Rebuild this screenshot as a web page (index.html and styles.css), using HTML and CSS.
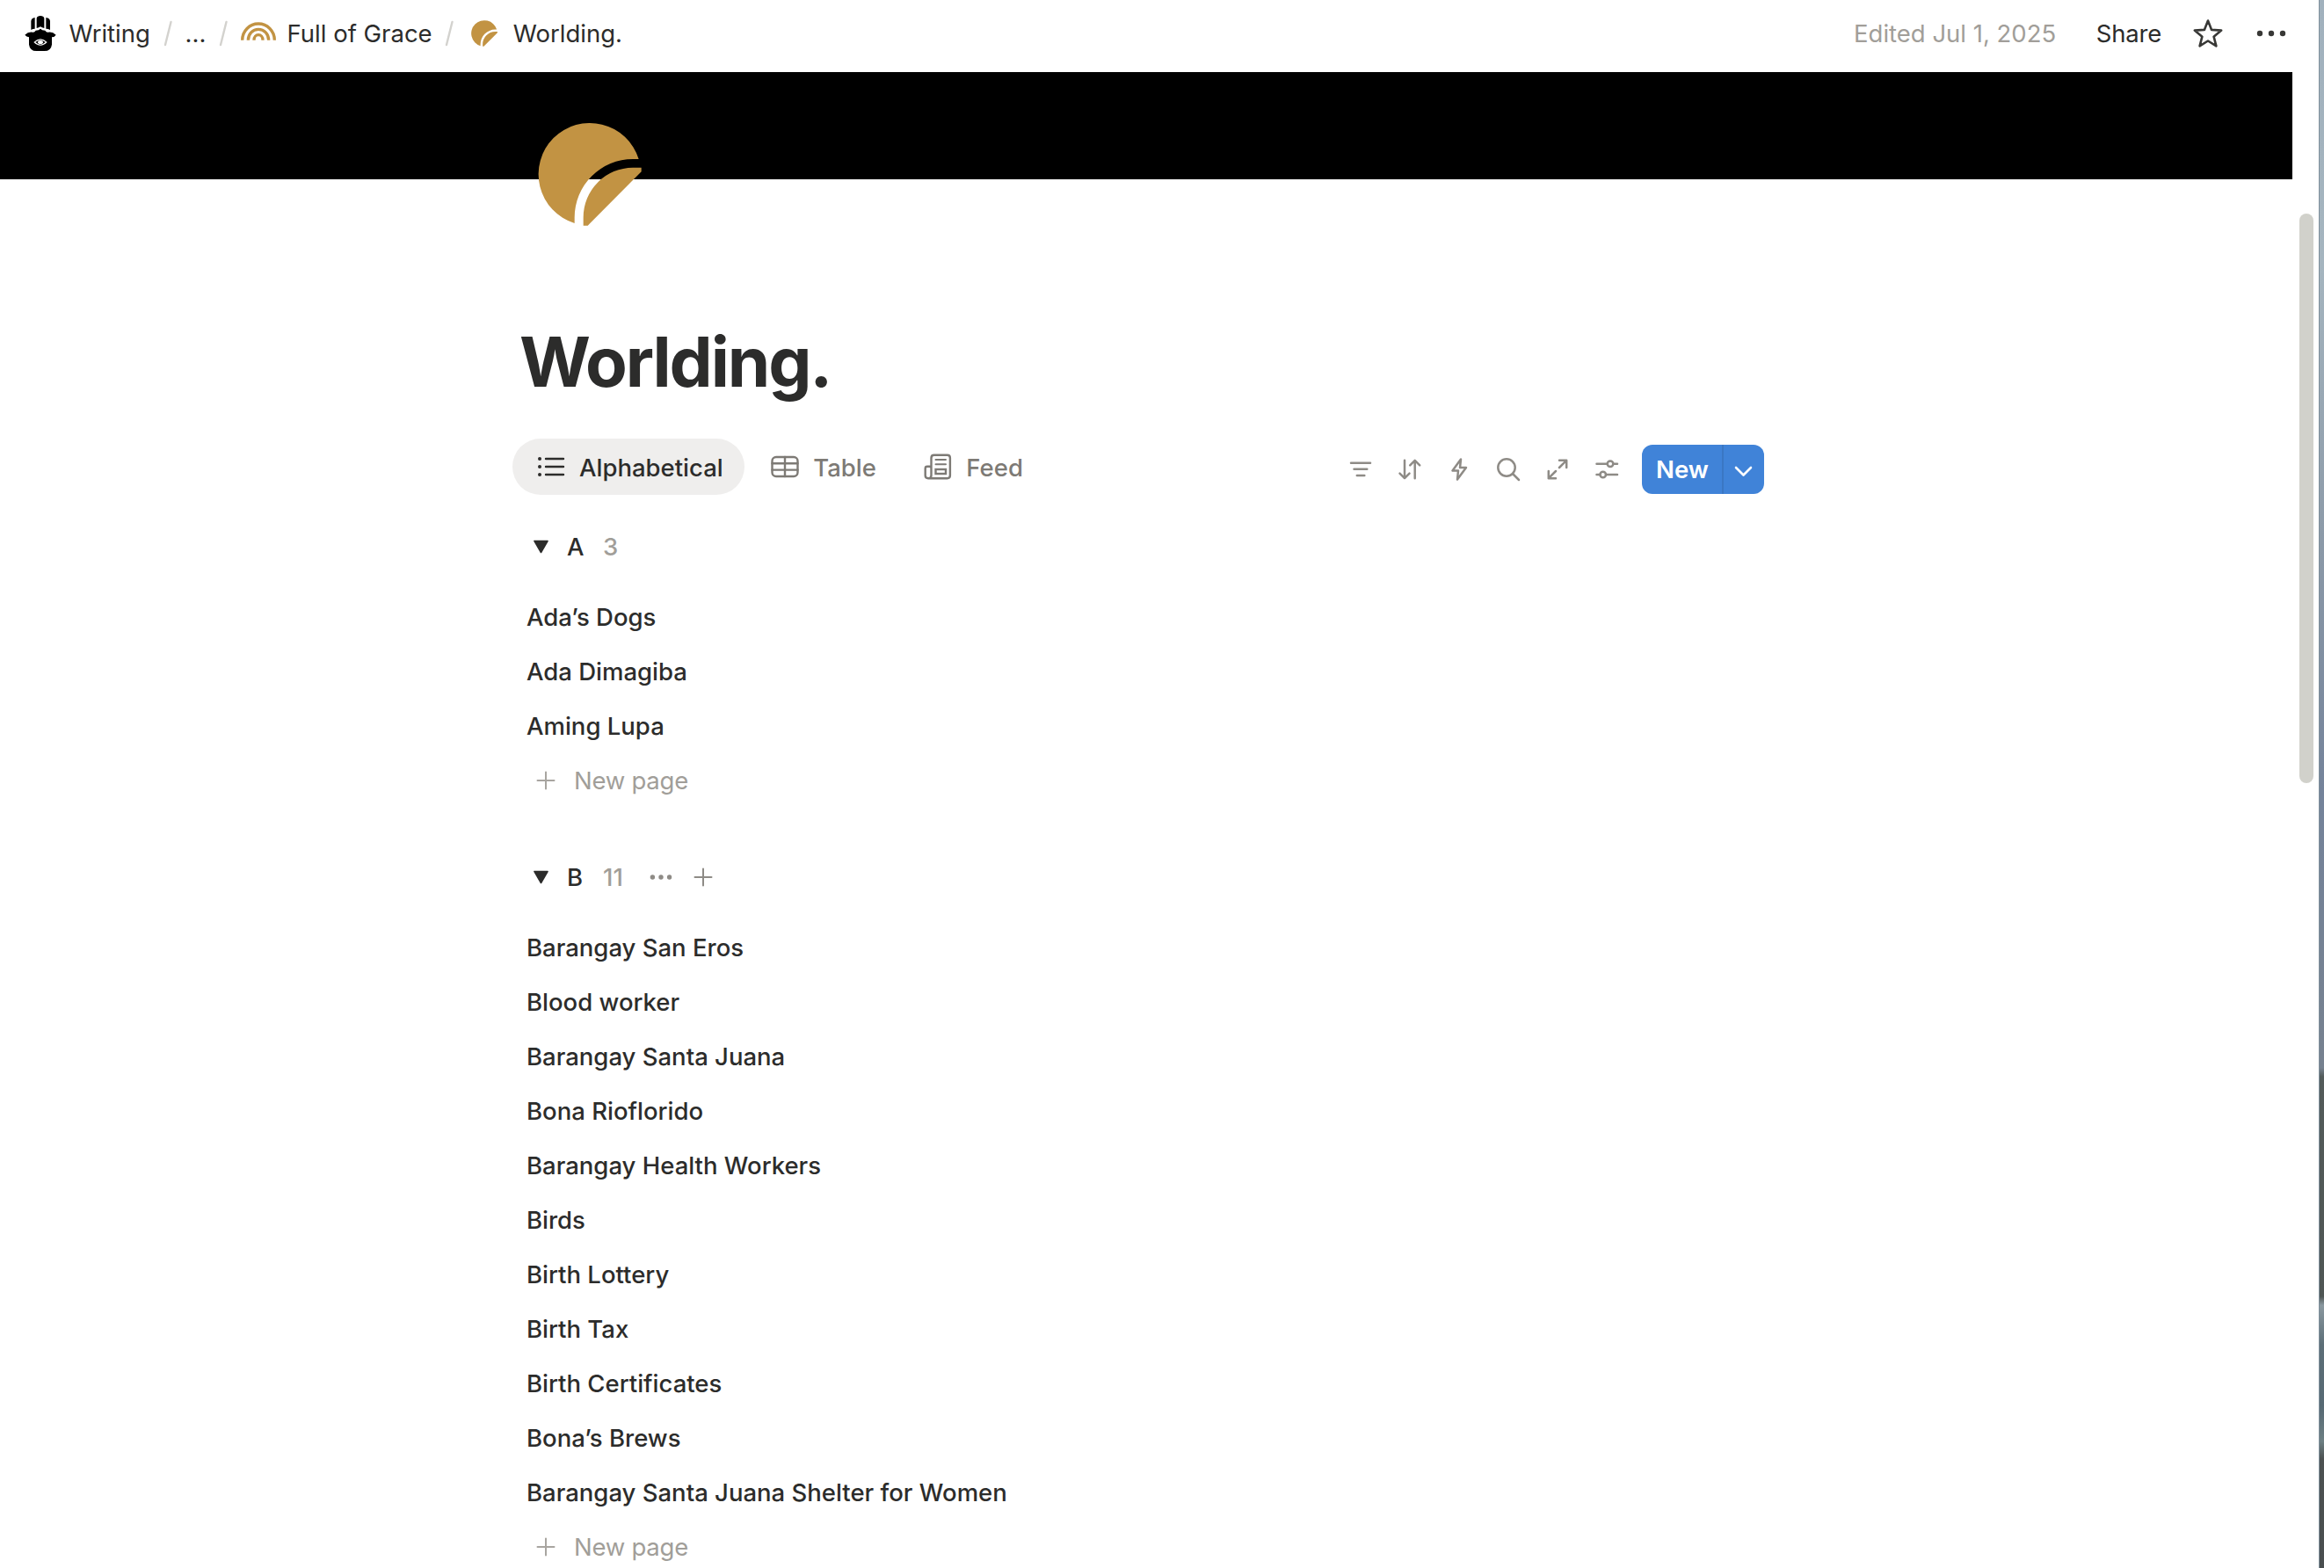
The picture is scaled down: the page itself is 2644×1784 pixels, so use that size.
FILE: index.html
```html
<!DOCTYPE html>
<html lang="en">
<head>
    <meta charset="utf-8">
    <meta name="viewport" content="width=device-width, initial-scale=1.0">
    <title>Worlding.</title>
    <link rel="stylesheet" href="styles.css">
</head>
<body>
    <div class="window">
        <header class="topbar">
            <nav class="breadcrumbs">
                <a class="crumb">
                    <svg class="crumb-icon" viewBox="78 54 120 120">
                        <path d="M106 102V72q1-10 13-12v38q-7 0-13 4zM125 96V62q2-8 13-8t13 8v34q-8-1-13-5-5 4-13 5zM171 102V72q-1-10-14-12v38q7 0 14 4z"/>
                        <path d="M85 119Q97 107 112 110Q118 111 122 104Q133 104 138 98Q143 104 154 104Q158 111 164 110Q179 107 191 119Q186 127 177 127V152Q174 174 152 174H124Q102 174 99 152V127Q90 126 85 119Z"/>
                        <path fill="#fff" d="M115 144Q138 122 161 144Q138 167 115 144Z"/>
                        <path d="M121 144Q138 129 155 144Q138 160 121 144Z"/>
                        <ellipse fill="#fff" cx="138" cy="144" rx="9" ry="6"/>
                    </svg>
                    <span>Writing</span>
                </a>
                <svg class="slash" viewBox="0 0 14 32"><path d="M4 29L10.500 3"/></svg>
                <a class="crumb"><span>...</span></a>
                <svg class="slash" viewBox="0 0 14 32"><path d="M4 29L10.500 3"/></svg>
                <a class="crumb">
                    <svg class="crumb-icon rainbow" viewBox="822 54 120 120">
                        <path d="M827 137a55 56 0 0 1 110 0M847 137a35 37 0 0 1 70 0M867 137a15 18 0 0 1 30 0"/>
                    </svg>
                    <span>Full of Grace</span>
                </a>
                <svg class="slash" viewBox="0 0 14 32"><path d="M4 29L10.500 3"/></svg>
                <a class="crumb">
                    <svg class="crumb-icon gold" viewBox="38 -1 472 472">
                        <path d="M441 183A175 175 0 1 0 222 402V382A199 199 0 0 1 421 183Z"/>
                        <path d="M252 410V382A170 170 0 0 1 421 212H450V226L267 410Z"/>
                    </svg>
                    <span>Worlding.</span>
                </a>
            </nav>
            <div class="topbar-actions">
                <span class="edited">Edited Jul 1, 2025</span>
                <a class="share">Share</a>
                <svg class="action-icon" viewBox="0 0 40 40">
                    <path class="star" d="M20 5.500L24.100 15.900L35.200 16.600L26.600 23.700L29.400 34.400L20 28.500L10.600 34.400L13.400 23.700L4.800 16.600L15.900 15.900Z"/>
                </svg>
                <svg class="action-icon" viewBox="0 0 40 40">
                    <circle cx="7" cy="20" r="3.200"/><circle cx="20" cy="20" r="3.200"/><circle cx="33" cy="20" r="3.200"/>
                </svg>
            </div>
        </header>

        <div class="cover"></div>

        <main class="page">
            <svg class="page-icon gold" viewBox="97 57 354 354">
                <path d="M441 183A175 175 0 1 0 222 402V382A199 199 0 0 1 421 183Z"/>
                <path d="M252 410V382A170 170 0 0 1 421 212H450V226L267 410Z"/>
            </svg>
            <h1>Worlding.</h1>

            <div class="view-bar">
                <div class="tabs">
                    <a class="tab active">
                        <svg viewBox="0 0 36 36">
                            <path d="M12 9H32M12 18H32M12 27H32"/>
                            <path class="bullets" d="M5 9h.01M5 18h.01M5 27h.01"/>
                        </svg>
                        <span>Alphabetical</span>
                    </a>
                    <a class="tab">
                        <svg viewBox="0 0 36 36">
                            <rect x="3.500" y="7" width="29" height="22" rx="4.500"/>
                            <path d="M18 7V29M3.500 14.300H32.500M3.500 21.600H32.500"/>
                        </svg>
                        <span>Table</span>
                    </a>
                    <a class="tab">
                        <svg viewBox="0 0 36 36">
                            <path d="M10.500 28V8q0-3.200 3.200-3.200h15q3.200 0 3.200 3.200v20q0 3.200-3.200 3.200H7q-3.300 0-3.300-3.200v-8q0-2.200 2.200-2.200h2.600q2 0 2 2M10.500 28q0 3-3 3.200"/>
                            <path class="thin" d="M15.500 10H27M15.500 15.300H27"/>
                            <rect x="15.500" y="21" width="11.500" height="5"/>
                        </svg>
                        <span>Feed</span>
                    </a>
                </div>
                <div class="tools">
                    <a class="tool"><svg viewBox="0 0 32 32"><path d="M5 8.700H27M8.500 15.800H23.300M11.800 23H20.300"/></svg></a>
                    <a class="tool"><svg viewBox="0 0 32 32"><path d="M10 5.700V26M4.500 20.700L10 26.200L15.500 20.700M21.700 26.300V6M16.200 11.300L21.700 5.800L27.200 11.300"/></svg></a>
                    <a class="tool"><svg viewBox="0 0 32 32"><path d="M18 4.500L8.500 17.500H15L14 27.500L24 14H17Z"/></svg></a>
                    <a class="tool"><svg viewBox="0 0 32 32"><circle cx="14" cy="14" r="9.700"/><path d="M21 21L28 28"/></svg></a>
                    <a class="tool"><svg viewBox="0 0 32 32"><path d="M5.800 18V26.200H14M5.800 26.200L14 18M18 5.800H26.200V14M26.200 5.800L18 14"/></svg></a>
                    <a class="tool"><svg viewBox="0 0 32 32"><path d="M4.500 9.700H16.700M23.300 9.700H28M4.500 22H8.300M15 22H28"/><circle cx="20" cy="9.700" r="3.300"/><circle cx="11.700" cy="22" r="3.300"/></svg></a>
                    <div class="new-button">
                        <span class="new-label">New</span>
                        <span class="new-more"><svg viewBox="0 0 24 24"><path d="M3 8L11.500 16.500L20 8"/></svg></span>
                    </div>
                </div>
            </div>

            <section class="group">
                <div class="group-header">
                    <svg class="toggle" viewBox="0 0 18 16"><path d="M1 1.500H16L8.500 14.500Z"/></svg>
                    <span class="letter">A</span>
                    <span class="count">3</span>
                </div>
                <ul>
                    <li>Ada’s Dogs</li>
                    <li>Ada Dimagiba</li>
                    <li>Aming Lupa</li>
                </ul>
                <a class="new-page">
                    <svg class="small-icon" viewBox="0 0 32 32"><path d="M16 6.500V25.500M6.500 16H25.500"/></svg>
                    <span>New page</span>
                </a>
            </section>

            <section class="group">
                <div class="group-header">
                    <svg class="toggle" viewBox="0 0 18 16"><path d="M1 1.500H16L8.500 14.500Z"/></svg>
                    <span class="letter">B</span>
                    <span class="count">11</span>
                    <svg class="small-icon dots" viewBox="0 0 32 32"><circle cx="6.400" cy="16" r="2.700"/><circle cx="16" cy="16" r="2.700"/><circle cx="25.600" cy="16" r="2.700"/></svg>
                    <svg class="small-icon add" viewBox="0 0 32 32"><path d="M16 6.500V25.500M6.500 16H25.500"/></svg>
                </div>
                <ul>
                    <li>Barangay San Eros</li>
                    <li>Blood worker</li>
                    <li>Barangay Santa Juana</li>
                    <li>Bona Rioflorido</li>
                    <li>Barangay Health Workers</li>
                    <li>Birds</li>
                    <li>Birth Lottery</li>
                    <li>Birth Tax</li>
                    <li>Birth Certificates</li>
                    <li>Bona’s Brews</li>
                    <li>Barangay Santa Juana Shelter for Women</li>
                </ul>
                <a class="new-page">
                    <svg class="small-icon" viewBox="0 0 32 32"><path d="M16 6.500V25.500M6.500 16H25.500"/></svg>
                    <span>New page</span>
                </a>
            </section>
        </main>

        <div class="scrollbar"></div>
    </div>
    <div class="desktop"></div>
</body>
</html>
```
FILE: styles.css
```css
* {
    margin: 0;
    padding: 0;
    box-sizing: border-box;
}

body {
    display: flex;
    height: 1784px;
    overflow: hidden;
    font-family: Inter, sans-serif;
    font-size: 27.5px;
    line-height: 40px;
    color: #2c2c2b;
    background-color: #ffffff;
}

svg {
    display: block;
    flex: none;
}

.window {
    position: relative;
    flex: 1;
    height: 1784px;
    overflow: hidden;
}

/* strip of desktop behind the window */
.desktop {
    width: 6px;
    border-left: 1px solid #7e8f9b;
    background: linear-gradient(#a1b1bd 0, #a5b5bf 300px, #8d9ba9 600px, #74839a 900px, #76818f 1215px, #535b5a 1225px, #4f5654 1475px, #8a989f 1485px, #5c6e77 1530px, #566973 1600px, #6d7f83 1640px, #4c5151 1660px, #494e4f 1784px);
}

/* Top bar */
.topbar {
    display: flex;
    justify-content: space-between;
    align-items: center;
    height: 82px;
    padding: 0 34px 6px 26px;
}

.breadcrumbs,
.crumb,
.topbar-actions {
    display: flex;
    align-items: center;
}

.crumb {
    gap: 12.5px;
}

.crumb-icon {
    width: 40px;
    height: 40px;
}

.slash {
    width: 14px;
    height: 32px;
    margin: 0 13px 0 12.7px;
    fill: none;
    stroke: #d3d2ce;
    stroke-width: 2.4;
    stroke-linecap: round;
}

.rainbow {
    fill: none;
    stroke: #c29343;
    stroke-width: 10;
}

.gold {
    fill: #c29343;
}

.edited {
    color: #a19e99;
    margin-right: 45.5px;
}

.share {
    letter-spacing: -0.2px;
    margin-right: 2px;
}

.action-icon {
    width: 40px;
    height: 40px;
    margin-left: 32px;
    fill: #383836;
}

.share + .action-icon {
    margin-left: 31px;
}

.star {
    fill: none;
    stroke: #383836;
    stroke-width: 2.6;
    stroke-linejoin: round;
}

/* Cover and title */
.cover {
    width: 2608px;
    height: 122px;
    background-color: #000000;
}

.page {
    width: 2007px;
    padding-left: 583px;
}

.page-icon {
    position: relative;
    width: 118px;
    height: 118px;
    margin: -65px 0 0 29px;
}

h1 {
    margin: 107px 0 40px 8px;
    font-size: 78px;
    line-height: 95px;
    font-weight: 700;
    letter-spacing: -2.1px;
}

/* Views */
.view-bar {
    display: flex;
    justify-content: space-between;
    height: 64px;
}

.tabs {
    display: flex;
    gap: 2px;
}

.tab {
    display: flex;
    align-items: center;
    gap: 14px;
    height: 64px;
    padding: 0 24.5px 0 26px;
    border-radius: 32px;
    font-weight: 500;
    color: #7d7a75;
}

.tab span {
    padding-top: 1px;
}

.tab.active {
    background-color: #efeeed;
    color: #2c2c2b;
}

.tab svg {
    width: 36px;
    height: 36px;
    fill: none;
    stroke: currentColor;
    stroke-width: 2.4;
    stroke-linecap: round;
}

.tab .bullets {
    stroke-width: 4;
}

.tab .thin {
    stroke-width: 2;
}

.tools {
    display: flex;
    align-items: center;
    padding-top: 6px;
}

.tool {
    width: 56px;
    padding: 0 12px;
}

.tool svg {
    width: 32px;
    height: 32px;
    fill: none;
    stroke: #8e8b86;
    stroke-width: 2.5;
    stroke-linecap: round;
    stroke-linejoin: round;
}

.new-button {
    display: flex;
    width: 139px;
    height: 56px;
    margin-left: 12px;
    border-radius: 12px;
    background-color: #4083d8;
    color: #ffffff;
    font-weight: 600;
    line-height: 56px;
}

.new-label {
    flex: 1;
    padding-left: 16px;
    border-right: 2px solid #3a77c3;
}

.new-more {
    display: flex;
    align-items: center;
    justify-content: center;
    width: 46px;
}

.new-more svg {
    width: 24px;
    height: 24px;
    margin-top: 4px;
    fill: none;
    stroke: #ffffff;
    stroke-width: 2.6;
    stroke-linecap: round;
    stroke-linejoin: round;
}

/* Groups */
.group {
    padding: 10px 0 20px 16px;
}

.group-header {
    display: flex;
    align-items: center;
    height: 98px;
    padding-left: 8px;
    font-weight: 500;
}

.toggle {
    width: 18px;
    height: 16px;
    fill: #2c2c2b;
    stroke: #2c2c2b;
    stroke-width: 1.6;
    stroke-linejoin: round;
}

.letter {
    width: 41px;
    margin-left: 20px;
}

.count {
    color: #a19e99;
}

.group ul {
    list-style: none;
}

.group li {
    height: 62px;
    line-height: 62px;
    font-weight: 500;
}

.new-page {
    display: flex;
    align-items: center;
    gap: 16px;
    height: 62px;
    padding-left: 6px;
    letter-spacing: -0.25px;
    color: #a19e99;
}

.small-icon {
    width: 32px;
    height: 32px;
    fill: none;
    stroke: #a8a5a0;
    stroke-width: 2;
    stroke-linecap: round;
}

.small-icon.dots {
    margin-left: 27px;
    fill: #8e8b86;
    stroke: none;
}

.small-icon.add {
    margin-left: 16px;
    stroke: #8e8b86;
}

.scrollbar {
    position: absolute;
    top: 243px;
    right: 6px;
    width: 16px;
    height: 648px;
    border-radius: 8px;
    background-color: #d1d1cb;
}
```
